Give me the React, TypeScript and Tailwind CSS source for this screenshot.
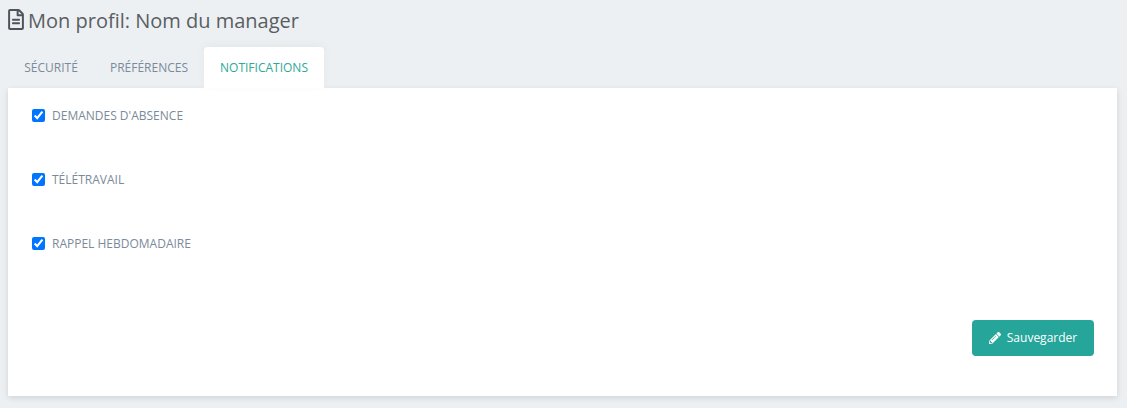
import { FaPencilAlt, FaRegFileAlt } from "react-icons/fa";

const tabs = [
  { label: "SÉCURITÉ", width: "w-[86px]" },
  { label: "PRÉFÉRENCES", width: "w-[110px]" },
];

const options = ["DEMANDES D'ABSENCE", "TÉLÉTRAVAIL", "RAPPEL HEBDOMADAIRE"];

export default function App() {
  return (
    <div className="h-[408px] w-[1127px] overflow-hidden bg-[#ecf0f3] font-['Open_Sans','Noto_Sans',sans-serif]">
      {/* Title */}
      <div className="flex h-[47px] items-start pl-2 pt-[7px]">
        <FaRegFileAlt className="mt-[2px] h-[21px] w-[16px] text-[#4f5357]" />
        <h1 className="ml-[4px] text-[20px] leading-[27px] text-[#5a5e62]">Mon profil: Nom du manager</h1>
      </div>

      {/* Tabs */}
      <div className="flex h-[41px] pl-2 text-[12px]">
        {tabs.map((tab) => (
          <div key={tab.label} className={`flex items-center justify-center text-[#7b8a99] ${tab.width}`}>
            {tab.label}
          </div>
        ))}
        <div className="flex w-[120px] items-center justify-center rounded-t-[4px] bg-white text-[#2fa898] shadow-[0_-2px_8px_rgba(0,0,0,0.04)]">
          NOTIFICATIONS
        </div>
      </div>

      {/* Card */}
      <div className="ml-2 flex h-[308px] w-[1109px] flex-col bg-white pl-6 pr-[23px] shadow-[0_2px_6px_rgba(0,0,0,0.12)]">
        <div className="flex flex-col gap-[44px] pt-[17px]">
          {options.map((option) => (
            <label key={option} className="flex h-[20px] items-center text-[12px] text-[#7b8a99]">
              <input type="checkbox" defaultChecked className="m-0 h-[13px] w-[13px]" />
              <span className="ml-[7px] pt-[2px]">{option}</span>
            </label>
          ))}
        </div>
        <div className="mt-[67px] flex justify-end">
          <button className="flex h-[36px] w-[122px] items-center justify-center gap-[6px] rounded-[4px] bg-[#26a69a] text-[12px] text-white">
            <FaPencilAlt className="h-[12px] w-[12px]" />
            Sauvegarder
          </button>
        </div>
      </div>
    </div>
  );
}
